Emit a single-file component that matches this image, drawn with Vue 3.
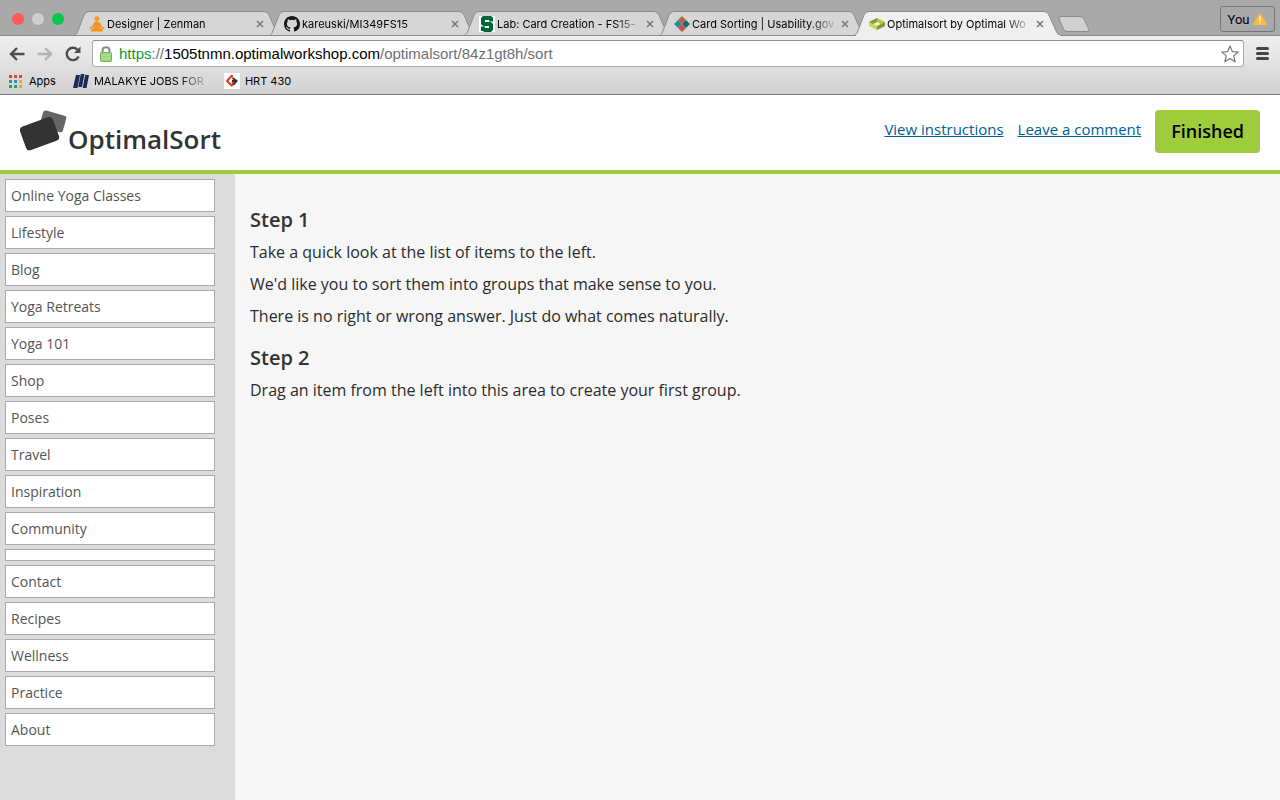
<script setup>
const tabs = [
  { icon: 'yoga', title: 'Designer | Zenman' },
  { icon: 'github', title: 'kareuski/MI349FS15' },
  { icon: 'spartan', title: 'Lab: Card Creation - FS15-' },
  { icon: 'usability', title: 'Card Sorting | Usability.gov' },
  { icon: 'optimal', title: 'Optimalsort by Optimal Wo', active: true },
]

const cards = [
  'Online Yoga Classes', 'Lifestyle', 'Blog', 'Yoga Retreats', 'Yoga 101', 'Shop',
  'Poses', 'Travel', 'Inspiration', 'Community', '', 'Contact', 'Recipes',
  'Wellness', 'Practice', 'About',
]
</script>

<template>
  <div class="window">
    <div class="tabstrip">
      <div class="lights">
        <button class="light red" aria-label="Close window"></button>
        <button class="light grey" aria-label="Minimise window"></button>
        <button class="light green" aria-label="Zoom window"></button>
      </div>
      <div class="tabs">
        <div v-for="tab in tabs" :key="tab.title" class="tab" :class="{ active: tab.active }">
          <svg class="shape" viewBox="0 0 210 25" width="210" height="25" aria-hidden="true">
            <path d="M-2 24.500C0 24 .5 23 1.500 21L8 4Q9.500 .5 13 .5H188Q191.500 .5 193 4L200 20C201 22 202 24 205 24.500Z" />
          </svg>
          <svg v-if="tab.icon === 'yoga'" class="fav" viewBox="0 0 16 16">
            <circle cx="8" cy="2.600" r="2.400" fill="#f7941e" />
            <path fill="#f7941e" d="M5.500 6Q8 4.500 10.500 6L13 10.500 15.500 11.500 15 13 11.500 11.500 10.500 10 10.500 11.500 14 13.500Q15 15.500 12 15.500H4Q1 15.500 2 13.500L5.500 11.500V10L4.500 11.500 1 13 .5 11.500 3 10.500Z" />
          </svg>
          <svg v-else-if="tab.icon === 'github'" class="fav" viewBox="0 0 16 16">
            <path fill="#191717" d="M8 0C3.580 0 0 3.580 0 8c0 3.540 2.290 6.530 5.470 7.590.4.070.55-.17.55-.38 0-.19-.01-.82-.01-1.490-2.010.37-2.530-.49-2.690-.94-.09-.23-.48-.94-.82-1.130-.28-.15-.68-.52-.01-.53.63-.01 1.080.58 1.230.82.72 1.210 1.870.87 2.330.66.070-.52.28-.87.51-1.070-1.780-.2-3.640-.89-3.640-3.950 0-.87.31-1.590.82-2.150-.08-.2-.36-1.020.08-2.120 0 0 .67-.21 2.200.82a7.600 7.600 0 0 1 4 0c1.530-1.040 2.200-.82 2.200-.82.44 1.100.16 1.920.08 2.120.51.56.82 1.270.82 2.150 0 3.070-1.870 3.750-3.650 3.950.29.25.54.73.54 1.480 0 1.070-.01 1.930-.01 2.200 0 .21.15.46.55.38A8 8 0 0 0 16 8c0-4.420-3.580-8-8-8Z" />
          </svg>
          <svg v-else-if="tab.icon === 'spartan'" class="fav" viewBox="0 0 16 16">
            <path fill="#fff" d="M0 0H16V16H0Z" />
            <path fill="#006633" d="M4 0H12L14 1.500V5.500H10V4H6V6H12L14 8V14L12 16H4.500V15H2V10.500H6V12H10V10H4L2 8V2Z" />
          </svg>
          <svg v-else-if="tab.icon === 'usability'" class="fav" viewBox="0 0 16 16">
            <path fill="#b3683f" d="M8 0 12 4 8 8 4 4Z" />
            <path fill="#278e94" d="M4 4 8 8 4 12 0 8Z" />
            <path fill="#176a74" d="M12 4 16 8 12 12 8 8Z" />
            <path fill="#c75050" d="M8 8 12 12 8 16 4 12Z" />
          </svg>
          <svg v-else class="fav" viewBox="0 0 16 16">
            <path fill="#c9d45a" d="M0 6 8 2 16 6V10L8 14 0 10Z" />
            <path fill="#87954c" d="M0 6 8 2V6L4 8Z" />
            <path fill="#b7cb36" d="M8 2 16 6 12 8 8 6Z" />
            <path fill="#c9d45a" d="M0 6 8 10V14L0 10Z" />
            <path fill="#87954c" d="M8 10 16 6V10L8 14Z" />
            <path fill="#efefef" d="M4.500 8 8 6.200 11.500 8 8 9.800Z" />
          </svg>
          <span class="title">{{ tab.title }}</span>
          <button class="close" :aria-label="'Close ' + tab.title">
            <svg viewBox="0 0 8 8" width="8" height="8"><path d="M1 1 7 7M7 1 1 7" /></svg>
          </button>
        </div>
        <button class="newtab" aria-label="New tab">
          <svg viewBox="0 0 32 17" width="32" height="17"><path d="M3 .5H22Q25 .5 26 3L31 14Q31.500 15.500 29 15.500H9Q6.500 15.500 5.500 13L1 3Q.5 .5 3 .5Z" /></svg>
        </button>
      </div>
      <button class="profile">You
        <svg viewBox="0 0 14 12" width="14" height="12" aria-hidden="true">
          <path fill="#fdbc40" d="M6 .8Q7-.5 8 .8L13.700 10.500Q14 12 12.500 12H1.500Q0 12 .3 10.500Z" />
          <path fill="#fff" d="M6.400 3.500H7.600V8H6.400ZM6.400 9H7.600V10.300H6.400Z" />
        </svg>
      </button>
    </div>

    <div class="chrome">
      <div class="toolbar">
        <button class="nav" aria-label="Back">
          <svg viewBox="0 0 16 14" width="16" height="14"><path d="M8 1 2 7 8 13M2 7H15.500" fill="none" stroke="#4c4c4c" stroke-width="2.400" /></svg>
        </button>
        <button class="nav" aria-label="Forward">
          <svg viewBox="0 0 16 14" width="16" height="14"><path d="M8 1 14 7 8 13M14 7H.5" fill="none" stroke="#b3b3b3" stroke-width="2.400" /></svg>
        </button>
        <button class="nav" aria-label="Reload">
          <svg viewBox="0 0 16 16" width="16" height="16"><path d="M12.800 4A6.200 6.200 0 1 0 13.600 10.500" fill="none" stroke="#4c4c4c" stroke-width="2.400" /><path fill="#4c4c4c" d="M15.500 .5V7H9Z" /></svg>
        </button>
        <div class="omnibox">
          <svg class="lock" viewBox="0 0 12 16" width="12" height="16" aria-hidden="true">
            <path d="M2.500 8V4.500Q2.500 1.200 6 1.200T9.500 4.500V8" fill="none" stroke="#8b8b8b" stroke-width="2" />
            <rect x=".5" y="6.500" width="11" height="9" rx="1" fill="#9fd884" stroke="#6cb352" />
            <path d="M1.500 9.500H10.500M1.500 12.500H10.500" stroke="#b0e096" />
          </svg>
          <a class="url" href="#"><span class="secure">https</span><span class="dim">://</span>1505tnmn.optimalworkshop.com<span class="dim">/optimalsort/84z1gt8h/sort</span></a>
          <button class="star" aria-label="Bookmark this page">
            <svg viewBox="0 0 18 18" width="18" height="18"><path d="M9 1 11.300 6.600 17.200 7 12.700 10.900 14.200 16.800 9 13.600 3.800 16.800 5.300 10.900 .8 7 6.700 6.600Z" fill="#fff" stroke="#777" stroke-width="1.200" stroke-linejoin="round" /></svg>
          </button>
        </div>
        <button class="menu" aria-label="Menu">
          <svg viewBox="0 0 13 13" width="13" height="13"><path d="M1.500 1.500H11.500M1.500 6.500H11.500M1.500 11.500H11.500" stroke="#444" stroke-width="3" stroke-linecap="round" /></svg>
        </button>
      </div>
      <nav class="bookmarks" aria-label="Bookmarks">
        <a class="bookmark apps" href="#">
          <svg viewBox="0 0 13 13" width="13" height="13" aria-hidden="true">
            <path fill="#ea4335" d="M0 0H3V3H0ZM5 0H8V3H5ZM10 0H13V3H10Z" />
            <path fill="#2a9d58" d="M0 5H3V8H0ZM0 10H3V13H0Z" />
            <path fill="#2e86e8" d="M5 5H8V8H5Z" />
            <path fill="#f5a623" d="M10 5H13V8H10ZM10 10H13V13H10Z" />
            <path fill="#2a9d58" d="M5 10H8V13H5Z" />
          </svg>
          <span>Apps</span>
        </a>
        <a class="bookmark jobs" href="#">
          <svg viewBox="0 0 16 16" width="16" height="16" aria-hidden="true">
            <path fill="#1d2a55" d="M3 2H7L4.500 15H0ZM7.800 1H11.500L9 14H5.200ZM12.200 2H16L13.500 15H9.700Z" />
          </svg>
          <span>MALAKYE JOBS FOR</span>
        </a>
        <a class="bookmark" href="#">
          <svg viewBox="0 0 16 16" width="16" height="16" aria-hidden="true">
            <path fill="#fff" d="M0 0H16V16H0Z" />
            <path d="M9 3.500 7.500 3 3 8 7.500 12.500 9.500 11 8 9" fill="none" stroke="#e8341c" stroke-width="2" />
            <path d="M8.500 5 12.500 8 9.500 11.500M8 8H11" fill="none" stroke="#333" stroke-width="2" />
          </svg>
          <span>HRT 430</span>
        </a>
      </nav>
    </div>

    <header class="header">
      <div class="brand">
        <svg viewBox="0 0 48 42" width="48" height="42" aria-hidden="true">
          <rect x="21" y="3" width="24" height="17" rx="2.500" fill="#666" transform="rotate(16 33.500 11.500)" />
          <rect x="2" y="11" width="35" height="25" rx="4" fill="#333" transform="rotate(-20 20 23.500)" />
        </svg>
        <span>OptimalSort</span>
      </div>
      <div class="actions">
        <a href="#">View instructions</a>
        <a href="#">Leave a comment</a>
        <button class="finished">Finished</button>
      </div>
    </header>

    <div class="body">
      <ul class="cards">
        <li v-for="(card, i) in cards" :key="i">{{ card }}</li>
      </ul>
      <main class="steps">
        <h2>Step 1</h2>
        <p>Take a quick look at the list of items to the left.</p>
        <p>We'd like you to sort them into groups that make sense to you.</p>
        <p>There is no right or wrong answer. Just do what comes naturally.</p>
        <h2>Step 2</h2>
        <p>Drag an item from the left into this area to create your first group.</p>
      </main>
    </div>
  </div>
</template>

<style>
body { margin: 0; }
</style>

<style scoped>
* { box-sizing: border-box; }
.window {
  min-height: 100vh;
  display: flex;
  flex-direction: column;
  font-family: "Open Sans", sans-serif;
  color: #333;
  overflow: hidden;
}
button {
  border: 0;
  padding: 0;
  background: none;
  font: inherit;
  color: inherit;
}
svg { display: block; flex: none; }

.tabstrip, .chrome { font-family: "Liberation Sans", sans-serif; color: #000; }
.tabstrip {
  height: 36px;
  display: flex;
  align-items: flex-end;
  background: #a9a9a9;
  box-shadow: inset 0 -1px #8b8b8b;
}
.lights {
  flex: none;
  width: 76px;
  padding-left: 12px;
  display: flex;
  gap: 8px;
  padding-bottom: 11px;
}
.light { width: 12px; height: 12px; border-radius: 50%; }
.red { background: #fc5b57; }
.grey { background: #cfcfcf; }
.green { background: #05c84f; }
.tabs { flex: 1; min-width: 0; display: flex; }
.tab {
  position: relative;
  flex: none;
  width: 210px;
  height: 25px;
  margin-right: -15px;
  padding: 1px 17px 0 13px;
  display: flex;
  align-items: center;
}
.shape { position: absolute; inset: 0; overflow: visible; }
.shape path { fill: #d6d6d6; stroke: #8b8b8b; }
.active { z-index: 1; }
.active .shape path { fill: #efefef; }
.active::after {
  content: "";
  position: absolute;
  left: 0;
  right: 6px;
  bottom: 0;
  height: 1px;
  background: #efefef;
}
.fav { position: relative; width: 16px; height: 16px; }
.title {
  position: relative;
  flex: 1;
  min-width: 0;
  margin-left: 2px;
  font-family: Inter, sans-serif;
  font-size: 11px;
  line-height: 16px;
  white-space: nowrap;
  overflow: hidden;
  -webkit-mask-image: linear-gradient(to right, #000 118px, transparent 146px);
  mask-image: linear-gradient(to right, #000 118px, transparent 146px);
}
.close { position: relative; width: 18px; height: 16px; display: grid; place-items: center; }
.close path { fill: none; stroke: #777; stroke-width: 1.500; }
.newtab { margin: 5px 0 0 7px; align-self: flex-start; }
.newtab path { fill: #d0d0d0; stroke: #8b8b8b; }
.profile {
  flex: none;
  align-self: flex-start;
  margin: 6px 5px 0 0;
  width: 55px;
  height: 26px;
  border: 1px solid #777;
  border-radius: 3px;
  background: #a9a9a9;
  display: flex;
  align-items: center;
  justify-content: center;
  gap: 4px;
  font: 13px Roboto, sans-serif;
}

.chrome {
  height: 59px;
  background: linear-gradient(#efefef, #d2d2d2);
  border-bottom: 1px solid #777;
}
.toolbar { display: flex; align-items: center; height: 35px; padding: 0 11px 0 9px; }
.nav { width: 16px; margin-right: 12px; display: grid; place-items: center; }
.nav:nth-child(3) { margin-right: 11px; }
.omnibox {
  flex: 1;
  min-width: 0;
  height: 27px;
  display: flex;
  align-items: center;
  padding: 0 4px 0 7px;
  background: #fff;
  border: 1px solid #aaa;
  border-top-color: #8f8f8f;
  border-radius: 3px;
}
.url { flex: 1; margin-left: 7px; font-size: 15px; line-height: 20px; color: #000; text-decoration: none; }
.secure { color: #0a9a2c; }
.dim { color: #6f6f6f; }
.menu { margin-left: 12px; width: 13px; }
.bookmarks { display: flex; align-items: center; height: 20px; padding-left: 9px; }
.bookmark {
  display: flex;
  align-items: center;
  gap: 5px;
  font-family: Inter, sans-serif;
  font-size: 11px;
  line-height: 16px;
  color: #000;
  text-decoration: none;
  white-space: nowrap;
}
.apps { gap: 7px; margin-right: 17px; }
.jobs { margin-right: 16px; }
.jobs span {
  width: 114px;
  overflow: hidden;
  -webkit-mask-image: linear-gradient(to right, #000 85px, transparent 116px);
  mask-image: linear-gradient(to right, #000 85px, transparent 116px);
}

.header {
  height: 79px;
  display: flex;
  justify-content: space-between;
  align-items: flex-start;
  padding: 15px 20px 0;
  background: #fff;
  border-bottom: 4px solid #9fcc3b;
}
.brand { display: flex; font-size: 26px; line-height: 36px; font-weight: 600; }
.brand span { margin-top: 11px; }
.actions { display: flex; gap: 14px; font-size: 15px; line-height: 20px; }
.actions a { margin-top: 9px; color: #006096; }
.finished {
  height: 43px;
  padding: 0 16px 2px;
  border-radius: 4px;
  background: #9fcc3b;
  color: #000;
  font-size: 18px;
  font-weight: 600;
}
.body { flex: 1; display: flex; }
.cards {
  flex: none;
  width: 235px;
  margin: 0;
  padding: 5px 20px 5px 5px;
  list-style: none;
  background: #dcdcdc;
  display: flex;
  flex-direction: column;
  gap: 4px;
}
.cards li {
  padding: 5px;
  border: 1px solid #aaa;
  background: #fff;
  color: #555;
  font-size: 14px;
  line-height: 21px;
}
.steps { flex: 1; padding: 32px 15px; background: #f6f6f6; }
h2 { margin: 0 0 6px; font-size: 20px; line-height: 28px; font-weight: 600; }
p { margin: 0 0 8px; font-size: 16px; line-height: 24px; color: #2b2b2b; }
p + h2 { margin-top: 16px; }
</style>
